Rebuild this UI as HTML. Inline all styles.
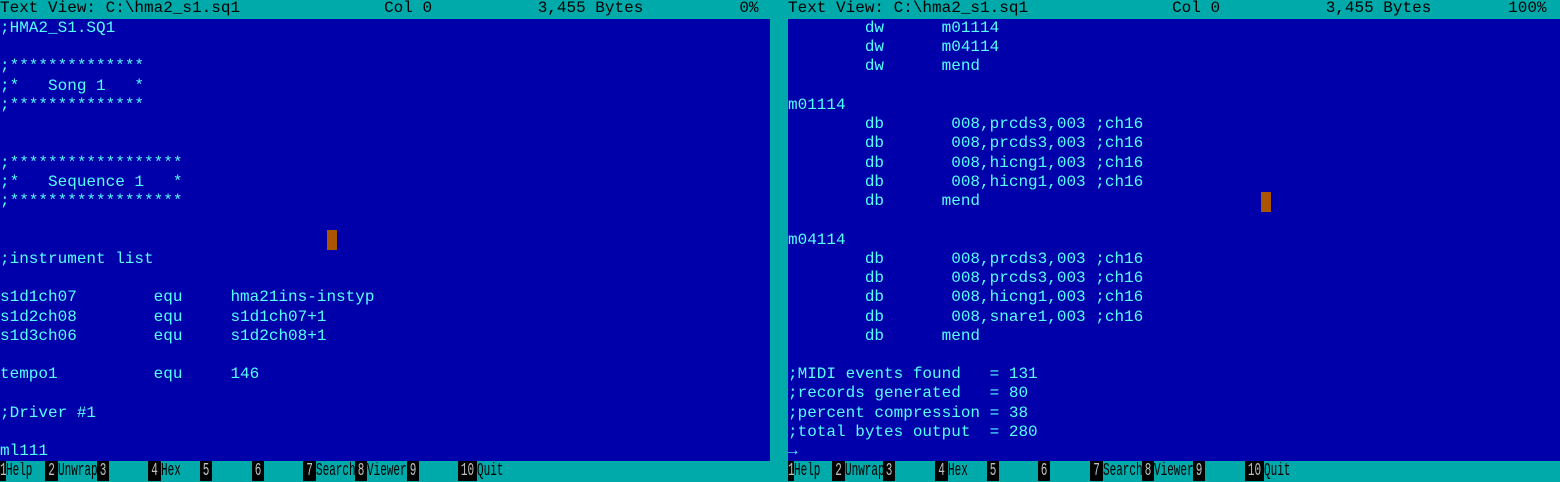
<!DOCTYPE html>
<html><head><style>
html,body{margin:0;padding:0;width:1560px;height:481px;overflow:hidden;background:#00aaaa}
.p{position:absolute;top:0;width:770px;height:481px}
.bar{position:absolute;left:0;top:0;width:770px;height:19px;background:#00aaaa;color:#000}
.body{position:absolute;left:0;top:19px;width:770px;height:442px;background:#0000aa}
pre{margin:0;font-family:"Liberation Mono",monospace;font-size:16px;line-height:19.24px;white-space:pre}
.body pre{color:#55ffff;position:absolute;left:0;top:0}
.bar pre{position:absolute;left:0;top:-1px}
.fb{position:absolute;left:0;top:461px;width:770px;height:20px;background:#00aaaa}
.k,.l{position:absolute;top:0;height:20px;font-family:"Liberation Mono",monospace;font-size:11px;line-height:12px;white-space:pre}
.k{background:#000;color:#c0c0c0;text-align:center}
.l{color:#000}
.k span,.l span{display:inline-block;transform:scaleY(1.65);transform-origin:0 0;margin-top:1px}
.cur{position:absolute;width:10px;height:20px;background:#aa5500}
</style></head><body>
<div class="p" style="left:0">
<div class="bar"><pre>Text View: C:\hma2_s1.sq1               Col 0           3,455 Bytes          0%</pre></div>
<div class="body"><pre>;HMA2_S1.SQ1

;**************
;*   Song 1   *
;**************


;******************
;*   Sequence 1   *
;******************


;instrument list

s1d1ch07        equ     hma21ins-instyp
s1d2ch08        equ     s1d1ch07+1
s1d3ch06        equ     s1d2ch08+1

tempo1          equ     146

;Driver #1

ml111</pre><div class="cur" style="left:327px;top:211px"></div></div>
<div class="fb">
<div class="l" style="left:6px"><span>Help</span></div>
<div class="l" style="left:58px"><span>Unwrap</span></div>
<div class="l" style="left:161px"><span>Hex</span></div>
<div class="l" style="left:316px"><span>Search</span></div>
<div class="l" style="left:367px"><span>Viewer</span></div>
<div class="l" style="left:477px"><span>Quit</span></div>
<div class="k" style="left:0;width:6px"><span>1</span></div>
<div class="k" style="left:45px;width:13px"><span>2</span></div>
<div class="k" style="left:97px;width:12px"><span>3</span></div>
<div class="k" style="left:148px;width:13px"><span>4</span></div>
<div class="k" style="left:200px;width:12px"><span>5</span></div>
<div class="k" style="left:252px;width:12px"><span>6</span></div>
<div class="k" style="left:303px;width:13px"><span>7</span></div>
<div class="k" style="left:355px;width:12px"><span>8</span></div>
<div class="k" style="left:407px;width:12px"><span>9</span></div>
<div class="k" style="left:458px;width:19px"><span>10</span></div>
</div>
</div>
<div class="p" style="left:788px;width:772px">
<div class="bar" style="width:772px"><pre>Text View: C:\hma2_s1.sq1               Col 0           3,455 Bytes        100%</pre></div>
<div class="body" style="width:772px"><pre>        dw      m01114
        dw      m04114
        dw      mend

m01114
        db       008,prcds3,003 ;ch16
        db       008,prcds3,003 ;ch16
        db       008,hicng1,003 ;ch16
        db       008,hicng1,003 ;ch16
        db      mend

m04114
        db       008,prcds3,003 ;ch16
        db       008,prcds3,003 ;ch16
        db       008,hicng1,003 ;ch16
        db       008,snare1,003 ;ch16
        db      mend

;MIDI events found   = 131
;records generated   = 80
;percent compression = 38
;total bytes output  = 280
→</pre><div class="cur" style="left:473px;top:173px"></div></div>
<div class="fb" style="width:772px">
<div class="l" style="left:6px"><span>Help</span></div>
<div class="l" style="left:57px"><span>Unwrap</span></div>
<div class="l" style="left:160px"><span>Hex</span></div>
<div class="l" style="left:315px"><span>Search</span></div>
<div class="l" style="left:366px"><span>Viewer</span></div>
<div class="l" style="left:476px"><span>Quit</span></div>
<div class="k" style="left:0;width:6px"><span>1</span></div>
<div class="k" style="left:44px;width:13px"><span>2</span></div>
<div class="k" style="left:95px;width:12px"><span>3</span></div>
<div class="k" style="left:147px;width:13px"><span>4</span></div>
<div class="k" style="left:199px;width:12px"><span>5</span></div>
<div class="k" style="left:250px;width:12px"><span>6</span></div>
<div class="k" style="left:302px;width:13px"><span>7</span></div>
<div class="k" style="left:354px;width:12px"><span>8</span></div>
<div class="k" style="left:405px;width:12px"><span>9</span></div>
<div class="k" style="left:457px;width:19px"><span>10</span></div>
</div>
</div>
</body></html>
